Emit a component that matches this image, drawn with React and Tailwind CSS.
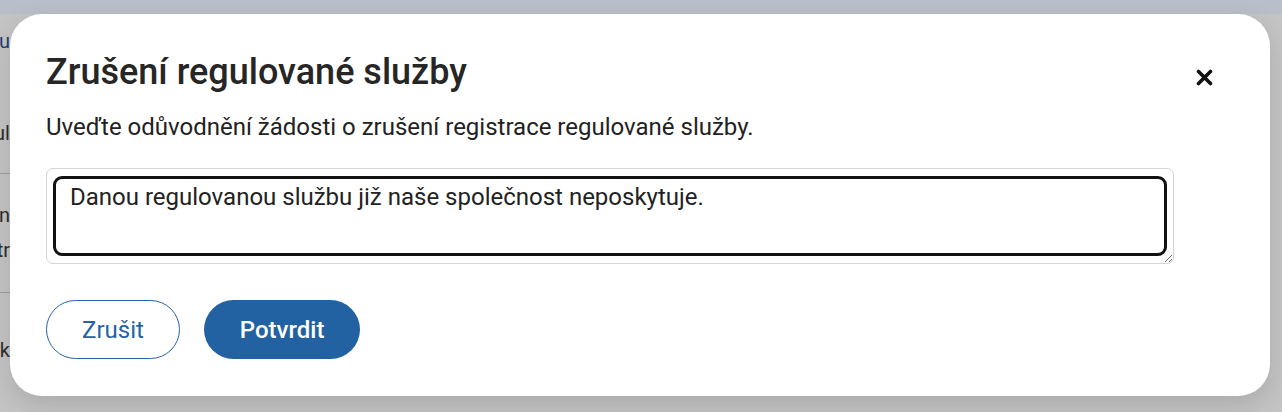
import React, { useState } from "react";

const BackdropLine = ({ text, className = "" }) => (
  <div className={`flex justify-end overflow-hidden whitespace-nowrap ${className}`}>
    <span className="shrink-0">{text}</span>
  </div>
);

const App = () => {
  const [reason, setReason] = useState(
    "Danou regulovanou službu již naše společnost neposkytuje."
  );

  return (
    <div
      className="relative w-[1282px] h-[412px] overflow-hidden bg-[#c4c4c4]"
      style={{ fontFamily: "Roboto, 'Noto Sans', Arial, sans-serif" }}
    >
      {/* stránka pod překryvem */}
      <div className="h-[14px] bg-[#b9bfc9]" />
      <div className="w-[10px] flex flex-col text-[20px] text-[#2e2e2e]">
        <BackdropLine text="Regu" className="mt-[12px] h-[30px] leading-[30px] text-[#1f3f6e]" />
        <BackdropLine text="Regul" className="mt-[62px] h-[30px] leading-[30px]" />
        <div className="mt-[25px] h-px bg-[#9e9e9e]" />
        <BackdropLine text="Dan" className="mt-[26px] h-[30px] leading-[30px]" />
        <BackdropLine text="Registr" className="mt-[5px] h-[30px] leading-[30px]" />
        <div className="mt-[27px] h-px bg-[#9e9e9e]" />
        <BackdropLine text="Odk" className="mt-[42px] h-[30px] leading-[30px]" />
      </div>

      {/* dialog */}
      <div className="absolute left-[10px] top-[14px] w-[1260px] h-[382px] bg-white rounded-[32px] shadow-[0_10px_28px_rgba(0,0,0,0.13)] pl-[36px] pt-[37px] pb-[37px] flex">
        <div className="w-[1128px] flex flex-col">
          <h2 className="text-[36px] leading-[42px] font-medium text-[#262626]">
            Zrušení regulované služby
          </h2>
          <p className="mt-[18px] text-[24px] leading-[32px] text-[#222]">
            Uveďte odůvodnění žádosti o zrušení registrace regulované služby.
          </p>
          <div className="relative mt-[25px] h-[96px]">
            <textarea
              value={reason}
              onChange={(e) => setReason(e.target.value)}
              className="block w-full h-full border border-[#d4d4d4] rounded-[7px] pl-[23px] pt-[14px] text-[24px] leading-[28px] text-[#222] outline-none resize-y"
            />
            <div className="pointer-events-none absolute inset-x-[7px] top-[8px] bottom-[8px] border-[3px] border-[#111] rounded-[9px]" />
          </div>
          <div className="mt-[36px] flex gap-[24px]">
            <button className="h-[59px] px-[35px] rounded-full border border-[#2563a6] text-[#2563a6] text-[24px] bg-white">
              Zrušit
            </button>
            <button className="h-[59px] px-[36px] rounded-full bg-[#2262a2] text-white text-[24px] font-medium">
              Potvrdit
            </button>
          </div>
        </div>
        <button className="ml-[22px] mt-[18px] w-[17px] h-[17px] flex items-center justify-center self-start" aria-label="Zavřít">
          <svg width="17" height="17" viewBox="0 0 17 17">
            <path d="M2.5 2.5 L14.5 14.5 M14.5 2.5 L2.5 14.5" stroke="#111" strokeWidth="3.6" strokeLinecap="round" />
          </svg>
        </button>
      </div>
    </div>
  );
};

export default App;
